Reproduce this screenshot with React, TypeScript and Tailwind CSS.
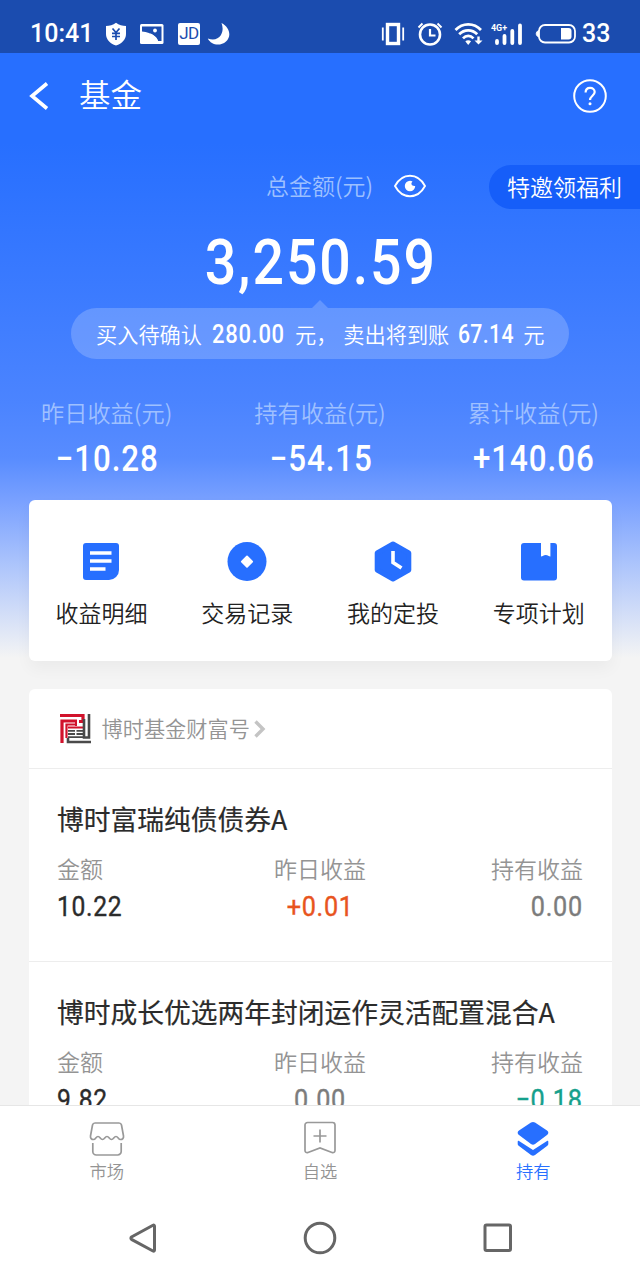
import React from 'react';

interface Fund {
  name: string;
  amount: string;
  yesterday: string;
  holding: string;
}

const stats = [
  { label: '昨日收益(元)', value: '−10.28' },
  { label: '持有收益(元)', value: '−54.15' },
  { label: '累计收益(元)', value: '+140.06' },
];

const funds: Fund[] = [
  { name: '博时富瑞纯债债券A', amount: '10.22', yesterday: '+0.01', holding: '0.00' },
  { name: '博时成长优选两年封闭运作灵活配置混合A', amount: '9.82', yesterday: '0.00', holding: '−0.18' },
];

const shortcuts = [
  { label: '收益明细', icon: <DetailIcon /> },
  { label: '交易记录', icon: <RecordIcon /> },
  { label: '我的定投', icon: <PlanIcon /> },
  { label: '专项计划', icon: <BookIcon /> },
];

function DetailIcon() {
  return (
    <svg width="40" height="42" viewBox="0 0 40 42">
      <path d="M5 2h30a3 3 0 0 1 3 3v24a10 10 0 0 1-10 10H5a3 3 0 0 1-3-3V5a3 3 0 0 1 3-3z" fill="#276fff" />
      <path d="M9 12h21.5M9 20h21.5M9 28h15.5" stroke="#fff" strokeWidth="3.4" />
    </svg>
  );
}

function RecordIcon() {
  return (
    <svg width="40" height="42" viewBox="0 0 40 42">
      <circle cx="20" cy="20.500" r="19.5" fill="#276fff" />
      <path d="M20 15.500l5.200 5.200L20 25.900l-5.200-5.200z" fill="#fff" stroke="#fff" strokeWidth="1.800" strokeLinejoin="round" />
    </svg>
  );
}

function PlanIcon() {
  return (
    <svg width="40" height="42" viewBox="0 0 40 42">
      <path d="M20 3l15.800 9v17L20 38 4.200 29V12z" fill="#276fff" stroke="#276fff" strokeWidth="5" strokeLinejoin="round" />
      <path d="M20 10v11.500l8.500 5.500" fill="none" stroke="#fff" strokeWidth="3.600" />
    </svg>
  );
}

function BookIcon() {
  return (
    <svg width="40" height="42" viewBox="0 0 40 42">
      <path d="M5 2h17v13.500c1.800 0 2.500-1.500 4.700-1.500s2.900 1.500 4.700 1.500V2H35a3 3 0 0 1 3 3v31.500a3 3 0 0 1-3 3H5a3 3 0 0 1-3-3V5a3 3 0 0 1 3-3z" fill="#276fff" />
    </svg>
  );
}

function StatusBar() {
  return (
    <div className="h-[53px] shrink-0 bg-[#1b4caf] flex items-center pt-[14px] pl-[30px] pr-[30px] text-white font-['Roboto',sans-serif] font-medium">
      <span className="text-[25px] leading-none w-[62px] whitespace-nowrap">10:41</span>
      <svg className="ml-[13px]" width="22" height="24" viewBox="0 0 22 24">
        <path d="M11 .8c3 2.400 6.500 3.200 10 3.200v8c0 5.500-4 9.500-10 11.600C5 21.500 1 17.500 1 12V4c3.500 0 7-.8 10-3.200z" fill="#fff" />
        <path d="M7.500 6.500L11 10.500l3.500-4M11 10.500V18M7 11.300h8M7 14.500h8" fill="none" stroke="#1b4caf" strokeWidth="1.700" />
      </svg>
      <svg className="ml-[12px]" width="26" height="22" viewBox="0 0 26 22">
        <rect x="1" y="1" width="23.500" height="20" rx="1.500" fill="#fff" />
        <path d="M3 3.500h19.500v14.500h-3.500c-.5-2-1.500-3.500-3-4.500C12 10.500 8 9 3 8.500z" fill="#1b4caf" />
        <path d="M11 10.500c3 .8 5.500 2.500 8 7.500h-4z" fill="#fff" />
        <circle cx="16" cy="7.500" r="1.900" fill="#fff" />
      </svg>
      <span className="ml-[13px] w-[22px] h-[22px] rounded-[2px] bg-white text-[#1b4caf] flex items-center justify-center text-[17px] leading-none font-normal tracking-[-0.500px]">
        JD
      </span>
      <svg className="ml-[7px]" width="24" height="24" viewBox="0 0 24 24">
        <path d="M14.500 1c8 4 10.500 13 4.500 18.500C13 24.800 4 23 .8 16.500c5.500 2 10.500.8 13-3.200 2.400-4 2.200-8 .7-12.300z" fill="#fff" />
      </svg>

      <div className="ml-auto flex items-center">
        <svg width="24" height="24" viewBox="0 0 24 24">
          <rect x="6.500" y="2.500" width="11" height="19" fill="none" stroke="#fff" strokeWidth="3.400" />
          <path d="M1.800 5.500v13M22.200 5.500v13" stroke="#fff" strokeWidth="1.800" />
        </svg>
        <svg className="ml-[12px]" width="26" height="24" viewBox="0 0 26 24">
          <circle cx="13" cy="12.500" r="10" fill="none" stroke="#fff" strokeWidth="2.600" />
          <path d="M13 7v6.500h5.500" fill="none" stroke="#fff" strokeWidth="2.200" />
          <path d="M1.500 5.500L5.500 1.500M24.500 5.500L20.500 1.500" stroke="#fff" strokeWidth="2" />
        </svg>
        <svg className="ml-[11px]" width="30" height="24" viewBox="0 0 30 24">
          <path d="M1.500 8c7-7.500 18.500-7.500 25.500 0M5.200 12.300c5-5.300 13-5.300 18 0M9 16.300c3-3.200 7.500-3.200 10.500 0" fill="none" stroke="#fff" strokeWidth="2.700" />
          <path d="M11.300 19.300c1.800-1.500 4-1.500 5.800 0L14.200 23z" fill="#fff" />
          <path d="M24.500 14.500V19" stroke="#fff" strokeWidth="2.400" />
          <path d="M20.500 18.500h8l-4 4z" fill="#fff" />
        </svg>
        <svg className="ml-[7px]" width="33" height="24" viewBox="0 0 33 24">
          <text x="0" y="9" fontSize="9.500" fontWeight="700" fill="#fff" textLength="16" lengthAdjust="spacingAndGlyphs">4G+</text>
          <path d="M6 19v2M13.500 14v7M21.300 9v12M29 3.500v17.500" stroke="#fff" strokeWidth="3.800" strokeLinecap="round" />
        </svg>
        <svg className="ml-[11px]" width="42" height="22" viewBox="0 0 42 22">
          <rect x="4" y="2" width="36" height="17.500" rx="6" fill="none" stroke="#fff" strokeWidth="1.800" />
          <path d="M3.500 7.500c-3 1.500-3 5 0 6.500z" fill="#fff" stroke="#fff" />
          <path d="M26 5h7.500a3 3 0 0 1 3 3v5.500a3 3 0 0 1-3 3H26z" fill="#fff" />
        </svg>
        <span className="ml-[5px] text-[25px] leading-none w-[28px] whitespace-nowrap">33</span>
      </div>
    </div>
  );
}

function Hero() {
  return (
    <section className="bg-[linear-gradient(to_bottom,#276fff_0px,#276fff_90px,#3a7aff_230px,#4b84ff_350px,#588cff_405px,#7ba2ff_450px,#b3c9fb_520px,#f4f4f4_605px)]">
      <header className="h-[86px] flex items-center pl-[29px] pr-[32px] text-white">
        <svg width="20" height="28" viewBox="0 0 20 28">
          <path d="M18 1.500L3 14l15 12.500" fill="none" stroke="#fff" strokeWidth="3.600" />
        </svg>
        <h1 className="ml-[30px] mb-[6px] text-[31.500px] leading-[44px] font-[350]">基金</h1>
        <svg className="ml-auto" width="36" height="36" viewBox="0 0 36 36">
          <circle cx="18" cy="18" r="15.800" fill="none" stroke="#fff" strokeWidth="2" />
          <path d="M13.600 14.500c0-3 2-4.700 4.500-4.700s4.600 1.700 4.600 4.300c0 3.500-4.700 3.900-4.700 8" fill="none" stroke="#fff" strokeWidth="2.200" />
          <circle cx="18" cy="25.800" r="1.500" fill="#fff" />
        </svg>
      </header>

      <div className="mt-[26px] h-[44px] flex items-center pl-[266px] text-[23px] leading-[34px]">
        <span className="mb-[5px] text-[#9dc0ff]">总金额(元)</span>
        <svg className="ml-[20px] mb-[2px]" width="34" height="26" viewBox="0 0 34 26">
          <path d="M2 13C5.500 6.500 11 2.800 17 2.800S28.500 6.500 32 13c-3.500 6.500-9 10.200-15 10.200S5.500 19.500 2 13z" fill="none" stroke="#fff" strokeWidth="1.900" />
          <path d="M17 7.800a5.200 5.200 0 1 0 5.200 5.200c-2.200.2-3.200-.4-3.600-1.400-.4-1.200-.1-2.300.9-3.100-.8-.5-1.600-.7-2.500-.7z" fill="#fff" />
        </svg>
        <span className="ml-auto h-[44px] w-[151px] rounded-l-full bg-[#165ef9] pl-[18px] pb-[3px] flex items-center text-white whitespace-nowrap">
          特邀领福利
        </span>
      </div>

      <div className="h-[99px] pt-[8px] flex items-center justify-center text-white font-['Roboto',sans-serif] font-medium text-[63px] leading-none">
        <span className="scale-x-[0.880] tracking-[2.200px] pl-[3px]">3,250.59</span>
      </div>

      <div className="relative mx-[71px] h-[51px] rounded-full bg-white/20 flex items-center pl-[25px] text-white text-[21.200px] leading-[30px] whitespace-nowrap">
        <svg className="absolute left-[241px] -top-[8px]" width="16" height="8" viewBox="0 0 16 8">
          <path d="M0 8L8 0l8 8z" fill="#fff" fillOpacity="0.200" />
        </svg>
        <span>买入待确认</span>
        <span className="w-[93px] pt-[3px] text-center font-['Roboto',sans-serif] font-medium text-[25px]">
          <span className="inline-block scale-x-[0.880] tracking-[0.800px]">280.00</span>
        </span>
        <span>元，</span>
        <span className="ml-[6px]">卖出将到账</span>
        <span className="w-[74px] pt-[3px] text-center font-['Roboto',sans-serif] font-medium text-[25px]">
          <span className="inline-block scale-x-[0.850] tracking-[0.400px]">67.14</span>
        </span>
        <span>元</span>
      </div>

      <div className="pt-[39px] grid grid-cols-3 text-center">
        {stats.map((s) => (
          <div key={s.label}>
            <p className="text-[23.200px] leading-[28px] text-[#9fc0ff]">{s.label}</p>
            <p className="mt-[15px] font-['Roboto',sans-serif] font-medium text-[36px] leading-[36px] text-white">
              <span className="inline-block scale-x-[0.870] tracking-[1.100px] pl-[2px]">{s.value}</span>
            </p>
          </div>
        ))}
      </div>

      <div className="mx-[28.500px] mt-[23px] h-[161px] rounded-[6px] bg-white shadow-[0_8px_16px_rgba(0,0,0,0.040)] grid grid-cols-4">
        {shortcuts.map((s) => (
          <div key={s.label} className="flex flex-col items-center pt-[41px]">
            {s.icon}
            <span className="mt-[13px] text-[23px] leading-[32px] text-[#222]">{s.label}</span>
          </div>
        ))}
      </div>
    </section>
  );
}

function valueColor(value: string) {
  if (value.startsWith('+')) return 'text-[#e8541e]';
  if (value.startsWith('−')) return 'text-[#15a08c]';
  return 'text-[#7c7c7c]';
}

function FundRow({ fund }: { fund: Fund }) {
  return (
    <div className="h-[193px] border-t border-[#ededed] px-[28.500px] pt-[31px]">
      <h3 className="text-[26.750px] leading-[38px] font-normal text-[#2b2b2b] whitespace-nowrap [-webkit-text-stroke:0.200px_#2b2b2b]">{fund.name}</h3>
      <div className="mt-[15px] grid grid-cols-3 text-[23px] leading-[30px] text-[#949494]">
        <span>金额</span>
        <span className="text-center">昨日收益</span>
        <span className="text-right">持有收益</span>
      </div>
      <div className="mt-[7px] grid grid-cols-3 font-['Roboto',sans-serif] text-[28px] leading-[34px] tracking-[0.800px] font-normal [-webkit-text-stroke:0.400px]">
        <span className="text-[#2b2b2b]">
          <span className="inline-block origin-left scale-x-[0.880]">{fund.amount}</span>
        </span>
        <span className={`text-center ${valueColor(fund.yesterday)}`}>
          <span className="inline-block scale-x-[0.900]">{fund.yesterday}</span>
        </span>
        <span className={`text-right ${valueColor(fund.holding)}`}>
          <span className="inline-block origin-right scale-x-[0.900]">{fund.holding}</span>
        </span>
      </div>
    </div>
  );
}

function FundList() {
  return (
    <section className="mx-[28.500px] mt-[28px] rounded-t-[6px] bg-white">
      <div className="h-[79px] flex items-center pl-[31px]">
        <svg width="31" height="31" viewBox="0 0 31 31">
          <path d="M2 30V8h15M0 2.500h23v6h-4" fill="none" stroke="#d1122b" strokeWidth="3.200" />
          <path d="M6.500 25V11.500h9M8 14.500h15" fill="none" stroke="#d1122b" strokeWidth="2.200" />
          <path d="M16 8v5" stroke="#d1122b" strokeWidth="2" />
          <path d="M8 17.800h7M16.500 17.800h7M8 21h7M16.500 21h7M8 24.200h15" stroke="#4a4a4a" strokeWidth="1.800" />
          <path d="M29 1v23.500h-5V6M31 29H8v-4" fill="none" stroke="#4a4a4a" strokeWidth="2.600" />
        </svg>
        <span className="ml-[11px] mb-[2px] text-[21.200px] leading-[30px] text-[#949494]">博时基金财富号</span>
        <svg className="ml-[4px]" width="12" height="18" viewBox="0 0 12 18">
          <path d="M1.500 1.500L9 9l-7.500 7.500" fill="none" stroke="#c4c4c4" strokeWidth="3.400" />
        </svg>
      </div>
      {funds.map((f) => (
        <FundRow key={f.name} fund={f} />
      ))}
    </section>
  );
}

function TabBar() {
  return (
    <nav className="h-[97px] shrink-0 border-t border-[#e6e6e6] bg-white grid grid-cols-3 text-[17.300px] leading-[24px] text-[#949494]">
      <div className="flex flex-col items-center pt-[15px]">
        <svg width="36" height="36" viewBox="0 0 36 36" fill="none" stroke="#999" strokeWidth="1.700">
          <path d="M6 2h24c1.300 0 2.200.8 2.500 2l2 11c.3 2.200-1 3.500-3 3.500-2.300 0-2.300-3-4.500-3s-2.300 3-4.500 3-2.300-3-4.500-3-2.300 3-4.500 3-2.300-3-4.500-3-2.200 3-4.500 3c-2 0-3.300-1.300-3-3.500l2-11c.3-1.200 1.200-2 2.500-2z" />
          <path d="M3.800 22v8.500a3.500 3.500 0 0 0 3.500 3.500h21.400a3.500 3.500 0 0 0 3.500-3.500V22" />
        </svg>
        <span className="mt-[2px]">市场</span>
      </div>
      <div className="flex flex-col items-center pt-[15px]">
        <svg width="36" height="36" viewBox="0 0 36 36" fill="none" stroke="#999" strokeWidth="1.700">
          <path d="M5.500 1.500h25a2.500 2.500 0 0 1 2.500 2.500v25.500c0 1.800-1.500 2.600-3 2L18 27 6 31.500c-1.500.6-3-.2-3-2V4a2.500 2.500 0 0 1 2.500-2.500z" />
          <path d="M18 8.500v13M11.500 15h13" />
        </svg>
        <span className="mt-[2px]">自选</span>
      </div>
      <div className="flex flex-col items-center pt-[15px] text-[#276fff]">
        <svg width="36" height="36" viewBox="0 0 36 36" fill="#276fff">
          <path d="M16 1.500a4 4 0 0 1 4 0l12 8c1.800 1.300 1.800 3.300 0 4.600l-12 9a4 4 0 0 1-4 0l-12-9c-1.800-1.300-1.800-3.300 0-4.600z" />
          <path d="M2.700 20.500c0-.6.700-1 1.300-.6L18 29l14-9.100c.6-.4 1.300 0 1.300.6v2.300c0 1-.4 1.700-1.300 2.300l-12 9a4 4 0 0 1-4 0l-12-9c-.9-.6-1.300-1.300-1.300-2.300z" />
        </svg>
        <span className="mt-[2px]">持有</span>
      </div>
    </nav>
  );
}

function SystemNav() {
  return (
    <div className="h-[78px] shrink-0 bg-white flex items-center justify-between pl-[127px] pr-[127px] pb-[7px]">
      <svg width="32" height="34" viewBox="0 0 32 34">
        <path d="M26 4.200L4.500 16a1.500 1.500 0 0 0 0 2.400L26 30c.9.500 1.500 0 1.500-1V5.200c0-1-.6-1.500-1.500-1z" fill="none" stroke="#666" strokeWidth="3" />
      </svg>
      <svg width="34" height="34" viewBox="0 0 34 34">
        <circle cx="17" cy="17" r="14.800" fill="none" stroke="#666" strokeWidth="3" />
      </svg>
      <svg width="32" height="34" viewBox="0 0 32 34">
        <rect x="4" y="4" width="25.500" height="25.500" rx="1.500" fill="none" stroke="#666" strokeWidth="3" />
      </svg>
    </div>
  );
}

export default function App() {
  return (
    <div className="w-[640px] h-[1280px] flex flex-col overflow-hidden bg-[#f4f4f4] font-['Noto_Sans_CJK_SC',sans-serif] font-[350]">
      <StatusBar />
      <main className="flex-1 min-h-0 overflow-hidden">
        <Hero />
        <FundList />
      </main>
      <TabBar />
      <SystemNav />
    </div>
  );
}
